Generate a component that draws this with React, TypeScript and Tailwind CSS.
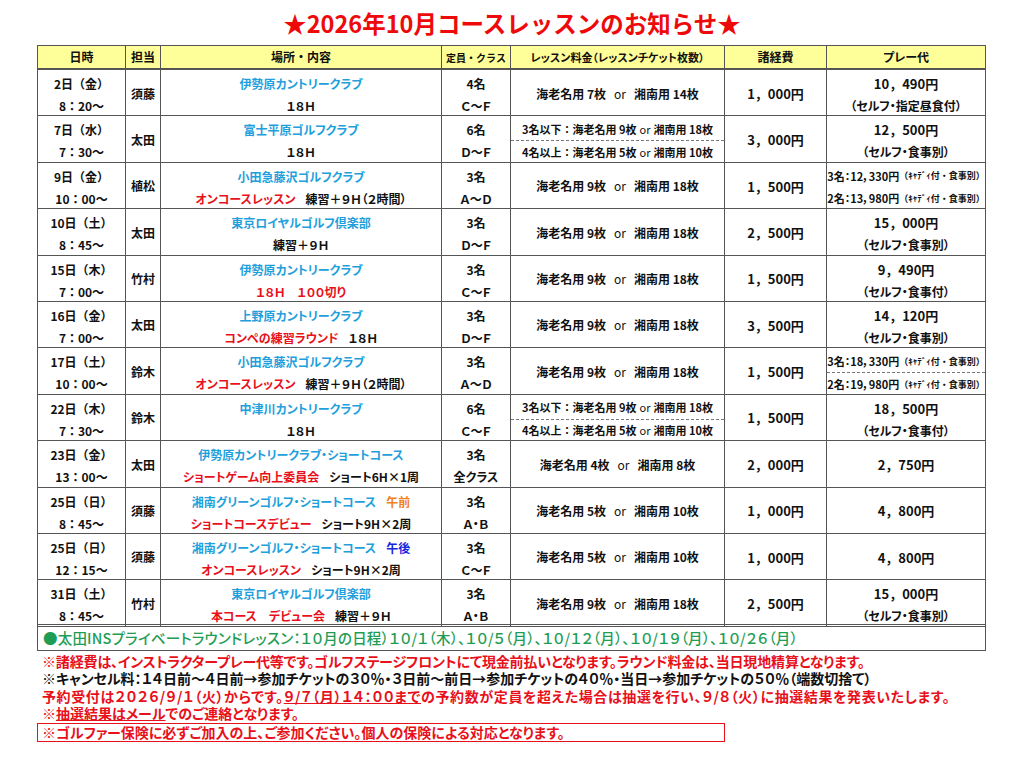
import React from "react";

type Row = {
  date: string;
  time: string;
  staff: string;
  place: React.ReactNode;
  sub: React.ReactNode;
  cap: string;
  cls: string;
  fee: React.ReactNode;
  cost: string;
  play: React.ReactNode;
};

const Blue = ({ children }: { children: React.ReactNode }) => (
  <span className="text-[#1ea0dc]">{children}</span>
);
const Red = ({ children }: { children: React.ReactNode }) => (
  <span className="text-[#e8101a]">{children}</span>
);

function Tickets({ e, s }: { e: number; s: number }) {
  return (
    <span>
      海老名用 {e}枚<span className="font-normal mx-[8px]">or</span>湘南用 {s}枚
    </span>
  );
}

// 3名以下 / 4名以上 split cell
function SplitTickets() {
  return (
    <div className="flex flex-col self-stretch w-full text-[11px] whitespace-nowrap">
      <div className="flex-1 flex items-center justify-center pt-[2px]">
        3名以下：海老名用 9枚<span className="font-normal mx-[3px]">or</span>湘南用 18枚
      </div>
      <div className="border-t border-dashed border-[#777]" />
      <div className="flex-1 flex items-center justify-center">
        4名以上：海老名用 5枚<span className="font-normal mx-[3px]">or</span>湘南用 10枚
      </div>
    </div>
  );
}

function Play({ price, note }: { price: string; note: string }) {
  return (
    <div className="flex flex-col items-center self-start pt-[2px]">
      <span className="text-[13px] leading-[23px]">{price}</span>
      <span className="leading-[22px] [font-feature-settings:'palt']">{note}</span>
    </div>
  );
}

function Caddie({ a, b, line }: { a: string; b: string; line?: boolean }) {
  return (
    <div className="flex flex-col self-stretch w-full text-[11px] whitespace-nowrap">
      <div className="flex-1 flex items-center justify-center pt-[2px]">
        <span className="[font-feature-settings:'palt']">{a}</span>
        <span className="text-[9px]">（ｷｬﾃﾞｨ付・食事別）</span>
      </div>
      {line && <div className="border-t border-dashed border-[#777]" />}
      <div className="flex-1 flex items-center justify-center">
        <span className="[font-feature-settings:'palt']">{b}</span>
        <span className="text-[9px]">（ｷｬﾃﾞｨ付・食事別）</span>
      </div>
    </div>
  );
}

const rows: Row[] = [
  {
    date: "2日（金）", time: "8：20～", staff: "須藤",
    place: <Blue>伊勢原カントリークラブ</Blue>, sub: "１８Ｈ",
    cap: "4名", cls: "Ｃ～Ｆ", fee: <Tickets e={7} s={14} />, cost: "1，000円",
    play: <Play price="10，490円" note="（セルフ・指定昼食付）" />,
  },
  {
    date: "7日（水）", time: "7：30～", staff: "太田",
    place: <Blue>富士平原ゴルフクラブ</Blue>, sub: "１８Ｈ",
    cap: "6名", cls: "Ｄ～Ｆ", fee: <SplitTickets />, cost: "3，000円",
    play: <Play price="12，500円" note="（セルフ・食事別）" />,
  },
  {
    date: "9日（金）", time: "10：00～", staff: "植松",
    place: <Blue>小田急藤沢ゴルフクラブ</Blue>,
    sub: <><Red>オンコースレッスン</Red><span className="ml-[10px]">練習＋９Ｈ（２時間）</span></>,
    cap: "3名", cls: "Ａ～Ｄ", fee: <Tickets e={9} s={18} />, cost: "1，500円",
    play: <Caddie a="3名：12，330円" b="2名：13，980円" />,
  },
  {
    date: "10日（土）", time: "8：45～", staff: "太田",
    place: <Blue>東京ロイヤルゴルフ倶楽部</Blue>, sub: "練習＋９Ｈ",
    cap: "3名", cls: "Ｄ～Ｆ", fee: <Tickets e={9} s={18} />, cost: "2，500円",
    play: <Play price="15，000円" note="（セルフ・食事別）" />,
  },
  {
    date: "15日（木）", time: "7：00～", staff: "竹村",
    place: <Blue>伊勢原カントリークラブ</Blue>, sub: <Red>１８Ｈ　１００切り</Red>,
    cap: "3名", cls: "Ｃ～Ｆ", fee: <Tickets e={9} s={18} />, cost: "1，500円",
    play: <Play price="9，490円" note="（セルフ・食事付）" />,
  },
  {
    date: "16日（金）", time: "7：00～", staff: "太田",
    place: <Blue>上野原カントリークラブ</Blue>,
    sub: <><Red>コンペの練習ラウンド</Red><span className="ml-[10px]">１８Ｈ</span></>,
    cap: "3名", cls: "Ｄ～Ｆ", fee: <Tickets e={9} s={18} />, cost: "3，500円",
    play: <Play price="14，120円" note="（セルフ・食事別）" />,
  },
  {
    date: "17日（土）", time: "10：00～", staff: "鈴木",
    place: <Blue>小田急藤沢ゴルフクラブ</Blue>,
    sub: <><Red>オンコースレッスン</Red><span className="ml-[10px]">練習＋９Ｈ（２時間）</span></>,
    cap: "3名", cls: "Ａ～Ｄ", fee: <Tickets e={9} s={18} />, cost: "1，500円",
    play: <Caddie a="3名：18，330円" b="2名：19，980円" line />,
  },
  {
    date: "22日（木）", time: "7：30～", staff: "鈴木",
    place: <Blue>中津川カントリークラブ</Blue>, sub: "１８Ｈ",
    cap: "6名", cls: "Ｃ～Ｆ", fee: <SplitTickets />, cost: "1，500円",
    play: <Play price="18，500円" note="（セルフ・食事付）" />,
  },
  {
    date: "23日（金）", time: "13：00～", staff: "太田",
    place: <Blue>伊勢原カントリークラブ・ショートコース</Blue>,
    sub: <><Red>ショートゲーム向上委員会</Red><span className="ml-[10px]">ショート6H×1周</span></>,
    cap: "3名", cls: "全クラス", fee: <Tickets e={4} s={8} />, cost: "2，000円",
    play: <span className="text-[13px]">2，750円</span>,
  },
  {
    date: "25日（日）", time: "8：45～", staff: "須藤",
    place: <><Blue>湘南グリーンゴルフ・ショートコース</Blue><span className="ml-[10px] text-[#f08020]">午前</span></>,
    sub: <><Red>ショートコースデビュー</Red><span className="ml-[10px]">ショート9H×2周</span></>,
    cap: "3名", cls: "Ａ・Ｂ", fee: <Tickets e={5} s={10} />, cost: "1，000円",
    play: <span className="text-[13px]">4，800円</span>,
  },
  {
    date: "25日（日）", time: "12：15～", staff: "須藤",
    place: <><Blue>湘南グリーンゴルフ・ショートコース</Blue><span className="ml-[10px] text-[#1428e0]">午後</span></>,
    sub: <><Red>オンコースレッスン</Red><span className="ml-[10px]">ショート9H×2周</span></>,
    cap: "3名", cls: "Ｃ～Ｆ", fee: <Tickets e={5} s={10} />, cost: "1，000円",
    play: <span className="text-[13px]">4，800円</span>,
  },
  {
    date: "31日（土）", time: "8：45～", staff: "竹村",
    place: <Blue>東京ロイヤルゴルフ倶楽部</Blue>,
    sub: <><Red>本コース　デビュー会</Red><span className="ml-[10px]">練習＋９Ｈ</span></>,
    cap: "3名", cls: "Ａ・Ｂ", fee: <Tickets e={9} s={18} />, cost: "2，500円",
    play: <Play price="15，000円" note="（セルフ・食事別）" />,
  },
];

const cols = "grid grid-cols-[88px_35px_281px_69px_214px_102px_1fr]";

export default function App() {
  return (
    <div className="w-[1024px] h-[769px] bg-white text-[#111] font-bold font-['Noto_Sans_CJK_JP','Liberation_Sans',sans-serif]">
      {/* title */}
      <div className="h-[45px] flex items-center justify-center pt-[3px] text-[23.5px] text-[#ee0a0a]">
        ★2026年10月コースレッスンのお知らせ★
      </div>

      {/* table */}
      <div className="ml-[37px] w-[949px] border-[1.5px] border-[#555] text-[12px]">
        <div className={`${cols} h-[24px] bg-[#ffff99] border-b-2 border-[#555] text-center`}>
          <div className="border-r border-[#555] flex items-center justify-center">日時</div>
          <div className="border-r border-[#555] flex items-center justify-center">担当</div>
          <div className="border-r border-[#555] flex items-center justify-center">場所・内容</div>
          <div className="border-r border-[#555] flex items-center justify-center text-[10px]">定員・クラス</div>
          <div className="border-r border-[#555] flex items-center justify-center text-[11px] [font-feature-settings:'palt']">レッスン料金（レッスンチケット枚数）</div>
          <div className="border-r border-[#555] flex items-center justify-center">諸経費</div>
          <div className="flex items-center justify-center [font-feature-settings:'palt']">プレー代</div>
        </div>

        {rows.map((r, i) => (
          <div
            key={i}
            className={`${cols} h-[46.4px] ${i === rows.length - 1 ? "border-b-[3px] border-double" : "border-b"} border-[#555]`}
          >
            <div className="border-r border-[#555] flex flex-col items-center pt-[2px]">
              <span className="leading-[23px]">{r.date}</span>
              <span className="leading-[22px]">{r.time}</span>
            </div>
            <div className="border-r border-[#555] flex items-center justify-center">{r.staff}</div>
            <div className="border-r border-[#555] flex flex-col items-center pt-[2px] whitespace-nowrap [font-feature-settings:'palt']">
              <span className="leading-[23px]">{r.place}</span>
              <span className="leading-[22px]">{r.sub}</span>
            </div>
            <div className="border-r border-[#555] flex flex-col items-center pt-[2px]">
              <span className="leading-[23px]">{r.cap}</span>
              <span className="leading-[22px] [font-feature-settings:'palt']">{r.cls}</span>
            </div>
            <div className="border-r border-[#555] flex items-center justify-center whitespace-nowrap">{r.fee}</div>
            <div className="border-r border-[#555] flex items-center justify-center text-[13px]">{r.cost}</div>
            <div className="flex items-center justify-center">{r.play}</div>
          </div>
        ))}

        <div className="h-[23px] flex items-center pl-[5px] text-[14.5px] tracking-[0.2px] font-medium text-[#1f9d55] whitespace-nowrap [font-feature-settings:'palt']">
          ●太田INSプライベートラウンドレッスン：１０月の日程）１０/１（木）、１０/５（月）、１０/１２（月）、１０/１９（月）、１０/２６（月）
        </div>
      </div>

      {/* notes */}
      <div className="ml-[37px] mt-[2px] text-[14px] leading-[17.6px] whitespace-nowrap [font-feature-settings:'palt']">
        <p className="pl-[5px] text-[#e8101a] tracking-[-0.15px]">
          ※諸経費は、インストラクタープレー代等です。ゴルフステージフロントにて現金前払いとなります。ラウンド料金は、当日現地精算となります。
        </p>
        <p className="pl-[5px]">
          ※キャンセル料：１４日前～４日前→参加チケットの３０％・３日前～前日→参加チケットの４０％・当日→参加チケットの５０％（端数切捨て）
        </p>
        <p className="pl-[5px] text-[#e8101a] tracking-[0.6px]">
          予約受付は２０２６/９/１（火）からです。<span className="underline">９/７（月）１４：００まで</span>の予約数が定員を超えた場合は抽選を行い、９/８（火）に抽選結果を発表いたします。
        </p>
        <p className="pl-[5px] text-[#e8101a]">
          ※<span className="underline">抽選結果はメール</span>でのご連絡となります。
        </p>
        <p className="w-[688px] h-[19px] border-[1.5px] border-[#e8101a] pl-[4px] text-[#e8101a] leading-[16px]">
          ※ゴルファー保険に必ずご加入の上、ご参加ください。個人の保険による対応となります。
        </p>
      </div>
    </div>
  );
}
